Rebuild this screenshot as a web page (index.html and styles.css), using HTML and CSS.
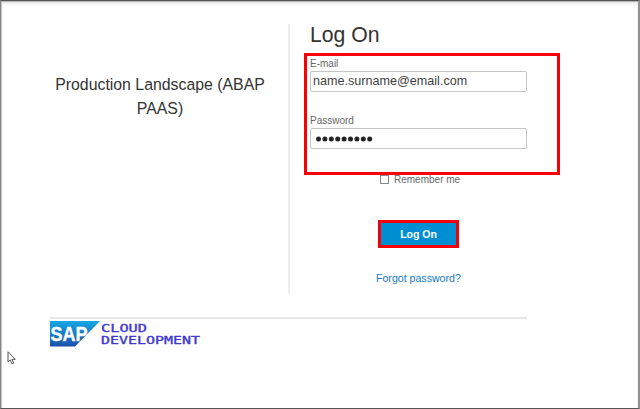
FILE: index.html
```html
<!DOCTYPE html>
<html lang="en">
<head>
<meta charset="utf-8">
<title>Log On</title>
<link rel="stylesheet" href="styles.css">
</head>
<body>
<div class="window">
  <main class="content">
    <section class="landscape"><h2>Production Landscape (ABAP PAAS)</h2></section>
    <form class="login">
      <h1>Log On</h1>
      <div class="fields">
        <label for="email">E-mail</label>
        <input id="email" class="email" type="text" value="name.surname@email.com">
        <label for="pw" class="pw-label">Password</label>
        <div id="pw" class="pw">
          <svg width="60" height="7" viewBox="0 0 60 7" fill="#242424"><circle cx="2.5" cy="4" r="2.5"/><circle cx="8.9" cy="4" r="2.5"/><circle cx="15.3" cy="4" r="2.5"/><circle cx="21.7" cy="4" r="2.5"/><circle cx="28.1" cy="4" r="2.5"/><circle cx="34.5" cy="4" r="2.5"/><circle cx="40.9" cy="4" r="2.5"/><circle cx="47.3" cy="4" r="2.5"/><circle cx="53.7" cy="4" r="2.5"/></svg>
        </div>
        <div class="highlight"></div>
      </div>
      <div class="remember"><span class="box"></span><span>Remember me</span></div>
      <button type="button">Log On</button>
      <a>Forgot password?</a>
    </form>
  </main>
  <footer>
    <svg width="152" height="27" viewBox="0 0 152 27">
      <defs><linearGradient id="g" x1="0" y1="0" x2="0" y2="1"><stop offset="0" stop-color="#14a8e4"/><stop offset="1" stop-color="#1c50aa"/></linearGradient></defs>
      <path d="M0 0H50L25 25.5H0Z" fill="url(#g)"/>
      <text class="sap" x="0.5" y="19.5" textLength="37" lengthAdjust="spacingAndGlyphs">SAP</text>
      <text class="cloud" x="51" y="11" textLength="46" lengthAdjust="spacingAndGlyphs">CLOUD</text>
      <text class="cloud" x="51" y="22.5" textLength="99" lengthAdjust="spacingAndGlyphs">DEVELOPMENT</text>
    </svg>
  </footer>
  <svg class="cursor" width="10" height="14" viewBox="0 0 10 14"><path d="M1 .8V11l2.3-2 1.8 3.9 1.7-.8L5 8.3h3.3Z" fill="#fff" stroke="#444" stroke-width=".9"/></svg>
</div>
</body>
</html>
```

FILE: styles.css
```css
* { box-sizing: border-box; }
body { margin: 0; font-family: "Liberation Sans", Arial, sans-serif; }
.window {
  position: relative;
  width: 640px;
  height: 409px;
  padding: 23px 0 0 49px;
  background: #fff;
  border: 1px solid #555;
  border-left-color: #858585;
  border-right: 2px solid #919191;
  box-shadow: inset 1px 0 #c4c4c4, inset 0 1px #b4b4b4, inset 0 3px 3px #e9e9e9;
  overflow: hidden;
}
.content { display: flex; height: 270px; }
.landscape {
  width: 240px;
  padding: 49px 18px 0 0;
  border-right: 2px solid #eee;
}
h2 {
  margin: 0;
  font-size: 15.85px;
  font-weight: 400;
  line-height: 24px;
  text-align: center;
  color: #333;
}
.login { width: 217px; margin-left: 20px; display: flex; flex-direction: column; }
h1 {
  margin: 0;
  height: 29px;
  font-size: 21.2px;
  font-weight: 400;
  line-height: 22px;
  color: #333;
}
.fields { position: relative; height: 121px; }
label {
  display: block;
  height: 18px;
  font-size: 10px;
  line-height: 21px;
  color: #666;
}
.email, .pw {
  display: block;
  width: 217px;
  height: 21px;
  border: 1px solid #c5c5c5;
  border-radius: 2px;
  background: #fff;
}
.email {
  padding: 0 2px 2px;
  font: 12.6px "Liberation Sans", Arial, sans-serif;
  color: #3f3f3f;
}
.pw-label { margin-top: 18px; }
.pw { padding: 6px 0 0 5px; }
.pw svg { display: block; }
.highlight {
  position: absolute;
  z-index: 1;
  left: -6px;
  top: 0;
  width: 256px;
  height: 122px;
  border: 3px solid #fa0000;
}
.remember {
  display: flex;
  align-items: center;
  gap: 5px;
  height: 11px;
  margin-left: 70px;
  font-size: 10px;
  color: #666;
}
.box { width: 9px; height: 9px; border: 1px solid #888; }
button {
  width: 81px;
  height: 28px;
  margin: 35px 0 0 68px;
  padding: 0;
  border: 3px solid #f50008;
  background: #008fd3;
  font: bold 10.5px "Liberation Sans", Arial, sans-serif;
  color: #fff;
}
a { margin: 24px 0 0 66px; font-size: 10.6px; line-height: 13px; color: #1679c6; }
footer { width: 477px; margin-top: 23px; padding-top: 2px; border-top: 2px solid #e6e6e6; }
footer svg { display: block; }
.sap { font: bold 20px "Liberation Sans", Arial, sans-serif; fill: #fff; stroke: #fff; stroke-width: .4px; }
.cloud { font: 11px "DejaVu Sans Mono", monospace; fill: #4038d0; stroke: #4038d0; stroke-width: .35px; }
.cursor { position: absolute; left: 6px; top: 350px; }
```
